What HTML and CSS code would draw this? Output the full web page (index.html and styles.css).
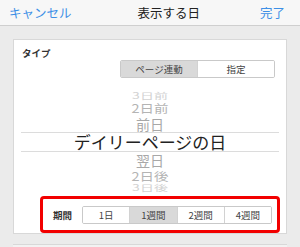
FILE: index.html
```html
<!DOCTYPE html>
<html lang="ja">
<head>
    <meta charset="UTF-8">
    <meta name="viewport" content="width=device-width, initial-scale=1.0">
    <title>表示する日</title>
    <link rel="stylesheet" href="styles.css">
</head>
<body>
    <nav class="navbar">
        <span class="nav-btn">キャンセル</span>
        <span class="nav-title">表示する日</span>
        <span class="nav-btn">完了</span>
    </nav>

    <div class="card">
        <div class="label type-label">タイプ</div>
        <div class="segments type-seg">
            <span class="seg active">ページ連動</span>
            <span class="seg">指定</span>
        </div>

        <div class="picker">
            <div class="pick far">3日前</div>
            <div class="pick near">2日前</div>
            <div class="pick next">前日</div>
            <div class="pick current">デイリーページの日</div>
            <div class="pick next">翌日</div>
            <div class="pick near after">2日後</div>
            <div class="pick far after">3日後</div>
        </div>

        <div class="period">
            <span class="label">期間</span>
            <div class="segments period-seg">
                <span class="seg">1日</span>
                <span class="seg active">1週間</span>
                <span class="seg">2週間</span>
                <span class="seg">4週間</span>
            </div>
        </div>
    </div>

    <div class="card-next"></div>
</body>
</html>
```

FILE: styles.css
```css
body {
    font-family: "Noto Sans CJK JP", "Noto Sans", sans-serif;
    background-color: #ebebeb;
    color: #333;
    margin: 0;
    padding: 0;
    width: 300px;
    height: 247px;
    overflow: hidden;
}
.navbar {
    height: 25px;
    background-color: #f7f7f7;
    border-bottom: 1px solid #cfcfcf;
    display: flex;
    align-items: center;
    justify-content: space-between;
    padding: 0 15px 0 9px;
    font-size: 12.5px;
}
.nav-btn {
    color: #3d8fe6;
}
.nav-title {
    color: #222;
    margin-left: 6px;
}

.card {
    margin: 13px 13px 0;
    height: 195px;
    box-sizing: border-box;
    background-color: #fff;
    border: 1px solid #d8d8d8;
    display: flex;
    flex-direction: column;
}
.card-next {
    margin: 10px 13px 0;
    height: 10px;
    background-color: #f2f2f2;
    border-top: 1px solid #d8d8d8;
}

.label {
    font-size: 9.5px;
    font-weight: bold;
    color: #333;
}
.type-label {
    padding: 6px 0 0 8px;
    line-height: 14px;
}

.segments {
    display: flex;
    border: 1px solid #c9c9c9;
    border-radius: 2px;
    height: 18px;
    box-sizing: border-box;
    overflow: hidden;
}
.seg {
    flex: 1;
    display: flex;
    align-items: center;
    justify-content: center;
    font-size: 9.5px;
    color: #444;
    background-color: #fff;
}
.seg + .seg {
    border-left: 1px solid #d2d2d2;
}
.seg.active {
    background-color: #d9d9d9;
}
.type-seg {
    width: 155px;
    margin: 0 11px 0 auto;
}

.picker {
    margin: 13px 7px 0;
    display: flex;
    flex-direction: column;
}
.pick {
    text-align: center;
    white-space: nowrap;
}
.pick.far {
    height: 9px;
    line-height: 9px;
    font-size: 14px;
    color: #d2d2d2;
    transform: scaleY(0.6);
}
.pick.far.after {
    height: 8px;
    line-height: 8px;
}
.pick.near {
    height: 16px;
    line-height: 16px;
    font-size: 14.5px;
    color: #b4b4b4;
    transform: scaleY(0.82);
}
.pick.near.after {
    height: 15px;
    line-height: 15px;
}
.pick.next {
    height: 16px;
    line-height: 16px;
    font-size: 14px;
    color: #a8a8a8;
}
.pick.current {
    height: 18px;
    line-height: 18px;
    font-size: 17px;
    color: #222;
    border-top: 1px solid #dcdcdc;
    border-bottom: 1px solid #dcdcdc;
}

.period {
    margin: 5px 0 0 26px;
    width: 240px;
    height: 37px;
    box-sizing: border-box;
    border: 3px solid #f20000;
    border-radius: 4px;
    display: flex;
    align-items: center;
    padding: 0 5px 0 10px;
}
.period .label {
    width: 29px;
}
.period-seg {
    flex: 1;
}
```
